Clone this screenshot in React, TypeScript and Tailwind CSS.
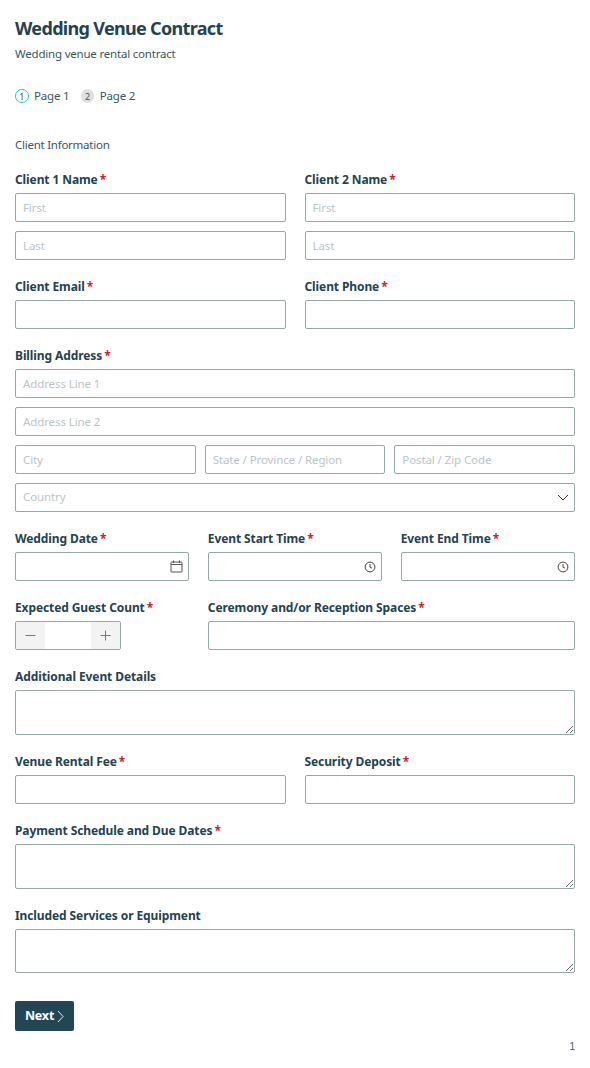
import React from "react";

const inputCls = "block w-full h-[29px] rounded-[2px] border border-[#94a8a8] bg-white pl-[7px] pr-2 text-[11.5px] tracking-[-0.1px] text-[#24424f] outline-none placeholder:text-[#b9c5c7]";

function Label({ children, req = true }: { children: React.ReactNode; req?: boolean }) {
  return (
    <div className="mb-[6px] flex h-[14px] items-center text-[12px] font-bold leading-[14px] tracking-[-0.1px] text-[#24424f]">
      <span>{children}</span>
      {req && <span className="ml-[2px] text-[#d0202e]">*</span>}
    </div>
  );
}

function Area({ h = "h-[45px]" }: { h?: string }) {
  return <textarea className={`block ${h} w-full rounded-[2px] border border-[#94a8a8] bg-white px-2 py-1 text-[12px] outline-none`} />;
}

function IconInput({ children }: { children: React.ReactNode }) {
  return (
    <div className="flex h-[29px] items-center justify-end rounded-[2px] border border-[#94a8a8] bg-white pr-[5px]">
      {children}
    </div>
  );
}

function Clock() {
  return (
    <svg width="12" height="12" viewBox="0 0 12 12" fill="none" stroke="#444" strokeWidth="1">
      <circle cx="6" cy="6" r="4.9" />
      <path d="M6 3v3.2l2 1" />
    </svg>
  );
}

export default function App() {
  return (
    <div className="min-h-[1068px] bg-white px-[15px] text-[#24424f] [font-family:'Noto_Sans','Open_Sans',sans-serif]">
      <h1 className="pt-[17px] text-[18px] font-bold leading-[22px] tracking-[-0.68px]">Wedding Venue Contract</h1>
      <p className="mt-[7px] text-[11.5px] leading-[16px] tracking-[-0.2px] text-[#3b5561]">Wedding venue rental contract</p>

      <div className="mt-[25px] flex h-[18px] items-center text-[11.5px] leading-[18px] tracking-[-0.2px] text-[#3b5561]">
        <span className="flex h-[13.5px] w-[13.5px] items-center justify-center rounded-full border border-[#2cc4b8] text-[9px] leading-none">1</span>
        <span className="ml-[5.5px]">Page 1</span>
        <span className="ml-[11.5px] flex h-[13.5px] w-[13.5px] items-center justify-center rounded-full bg-[#dfe1e1] text-[9px] leading-none">2</span>
        <span className="ml-[5.5px]">Page 2</span>
      </div>

      <div className="mt-[31px] mb-[19px] text-[11.5px] leading-[18px] tracking-[-0.25px] text-[#3b5561]">Client Information</div>

      <div className="grid grid-cols-2 gap-x-[19px]">
        <div>
          <Label>Client 1 Name</Label>
          <input className={inputCls} placeholder="First" />
          <input className={`${inputCls} mt-[9px]`} placeholder="Last" />
        </div>
        <div>
          <Label>Client 2 Name</Label>
          <input className={inputCls} placeholder="First" />
          <input className={`${inputCls} mt-[9px]`} placeholder="Last" />
        </div>
      </div>

      <div className="mt-[20px] grid grid-cols-2 gap-x-[19px]">
        <div>
          <Label>Client Email</Label>
          <input className={inputCls} />
        </div>
        <div>
          <Label>Client Phone</Label>
          <input className={inputCls} />
        </div>
      </div>

      <div className="mt-[20px]">
        <Label>Billing Address</Label>
        <div className="flex flex-col gap-[9px]">
          <input className={inputCls} placeholder="Address Line 1" />
          <input className={inputCls} placeholder="Address Line 2" />
          <div className="grid grid-cols-3 gap-x-[9px]">
            <input className={inputCls} placeholder="City" />
            <input className={inputCls} placeholder="State / Province / Region" />
            <input className={inputCls} placeholder="Postal / Zip Code" />
          </div>
          <div className="flex h-[29px] items-center justify-between rounded-[2px] border border-[#94a8a8] bg-white pb-[1px] pl-[7px] pr-[5px] text-[11.5px] tracking-[-0.1px] text-[#b9c5c7]">
            <span>Country</span>
            <svg width="12" height="7" viewBox="0 0 12 7" fill="none" stroke="#333" strokeWidth="1">
              <path d="M1 1l5 5 5-5" />
            </svg>
          </div>
        </div>
      </div>

      <div className="mt-[20px] grid grid-cols-3 gap-x-[18.5px]">
        <div>
          <Label>Wedding Date</Label>
          <IconInput>
            <svg width="13" height="13" viewBox="0 0 13 13" fill="none" stroke="#555" strokeWidth="1">
              <rect x="1" y="2" width="11" height="10" rx="0.5" />
              <path d="M1 4.5h11M3.5 .5v2.5M9.5 .5v2.5" />
            </svg>
          </IconInput>
        </div>
        <div>
          <Label>Event Start Time</Label>
          <IconInput><Clock /></IconInput>
        </div>
        <div>
          <Label>Event End Time</Label>
          <IconInput><Clock /></IconInput>
        </div>
      </div>

      <div className="mt-[20px] grid grid-cols-3 gap-x-[18.5px]">
        <div>
          <Label>Expected Guest Count</Label>
          <div className="flex h-[29px] w-[106px] items-stretch overflow-hidden rounded-[2px] border border-[#94a8a8] bg-white">
            <span className="flex w-[29px] items-center justify-center bg-[#f3f3f3]">
              <svg width="11" height="11" viewBox="0 0 11 11" stroke="#777" strokeWidth="1"><path d="M0.5 5.5h10" /></svg>
            </span>
            <span className="flex-1" />
            <span className="flex w-[29px] items-center justify-center bg-[#f3f3f3]">
              <svg width="11" height="11" viewBox="0 0 11 11" stroke="#777" strokeWidth="1"><path d="M0.5 5.5h10M5.5 .5v10" /></svg>
            </span>
          </div>
        </div>
        <div className="col-span-2">
          <Label>Ceremony and/or Reception Spaces</Label>
          <input className={inputCls} />
        </div>
      </div>

      <div className="mt-[20px]">
        <Label req={false}>Additional Event Details</Label>
        <Area />
      </div>

      <div className="mt-[20px] grid grid-cols-2 gap-x-[19px]">
        <div>
          <Label>Venue Rental Fee</Label>
          <input className={inputCls} />
        </div>
        <div>
          <Label>Security Deposit</Label>
          <input className={inputCls} />
        </div>
      </div>

      <div className="mt-[20px]">
        <Label>Payment Schedule and Due Dates</Label>
        <Area />
      </div>

      <div className="mt-[20px]">
        <Label req={false}>Included Services or Equipment</Label>
        <Area h="h-[44px]" />
      </div>

      <button className="mt-[28px] flex h-[30px] w-[59px] items-center justify-center gap-[3px] rounded-[2px] bg-[#234654] pt-[1px] text-[12.5px] font-bold tracking-[-0.2px] text-white">
        Next
        <svg width="7" height="13" viewBox="0 0 7 13" fill="none" stroke="#fff" strokeWidth="0.9"><path d="M1 1l5 5.5-5 5.5" /></svg>
      </button>

      <div className="mt-[9px] text-right text-[10px] leading-[14px] text-[#555] [font-family:'Liberation_Sans',sans-serif]">1</div>
    </div>
  );
}
